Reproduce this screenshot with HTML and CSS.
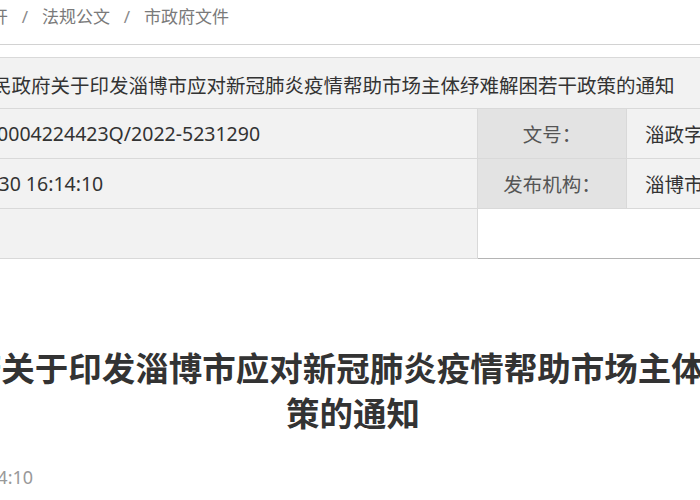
FILE: index.html
```html
<!DOCTYPE html>
<html lang="zh-CN">
<head>
<meta charset="utf-8">
<title>淄博市人民政府关于印发淄博市应对新冠肺炎疫情帮助市场主体纾难解困若干政策的通知</title>
<link rel="stylesheet" href="styles.css">
</head>
<body>
<div class="page">
  <div class="crumbs">
    <span class="crumb-lead">您当前的位置：</span><a class="crumb" href="#">首页</a><span class="sep">/</span><a class="crumb" href="#">政务公开</a><span class="sep">/</span><a class="crumb" href="#">法规公文</a><span class="sep">/</span><a class="crumb" href="#">市政府文件</a>
  </div>

  <table class="info">
    <colgroup>
      <col class="c-label"><col class="c-value-wide"><col class="c-label"><col class="c-value">
    </colgroup>
    <tr class="row-title">
      <th class="lbl">标题：</th>
      <td class="val val-title" colspan="3">淄博市人民政府关于印发淄博市应对新冠肺炎疫情帮助市场主体纾难解困若干政策的通知</td>
    </tr>
    <tr>
      <th class="lbl">索引号：</th>
      <td class="val">11370300004224423Q/2022-5231290</td>
      <th class="lbl">文号：</th>
      <td class="val val-right">淄政字〔2022〕42号</td>
    </tr>
    <tr>
      <th class="lbl">发文日期：</th>
      <td class="val">2022-05-30 16:14:10</td>
      <th class="lbl">发布机构：</th>
      <td class="val val-right">淄博市人民政府</td>
    </tr>
    <tr>
      <th class="lbl">有效性：</th>
      <td class="val"></td>
      <td class="blank" colspan="2"></td>
    </tr>
  </table>

  <h1 class="doc-title">淄博市人民政府关于印发淄博市应对新冠肺炎疫情帮助市场主体纾难解困若干政策的通知</h1>

  <div class="meta">
    <span class="meta-date">发布日期：2022-05-30 16:14:10</span>
    <span class="meta-font">【字体：大 中 小】</span>
  </div>
</div>
</body>
</html>
```
FILE: styles.css
```css
html, body {
  margin: 0;
  padding: 0;
  background: #ffffff;
  overflow: hidden;
}

body {
  font-family: "Noto Sans", "Noto Sans CJK SC", sans-serif;
  color: #333333;
}

.page {
  width: 1200px;
  margin-left: -247px;
}

/* breadcrumb */
.crumbs {
  box-sizing: border-box;
  height: 45px;
  padding-top: 5px;
  font-size: 17px;
  line-height: 24px;
  color: #7a7a7a;
  border-bottom: 1px solid #d2d2d2;
  white-space: nowrap;
}

.crumb {
  color: #7a7a7a;
  text-decoration: none;
}

.sep {
  display: inline-block;
  width: 34px;
  text-align: center;
  color: #8a8a8a;
}

/* info table */
.info {
  width: 1200px;
  margin-top: 12px;
  border-collapse: collapse;
  table-layout: fixed;
  font-size: 19.5px;
}

.c-label { width: 149px; }
.c-value-wide { width: 575px; }
.c-value { width: 328px; }

.info th,
.info td {
  height: 49px;
  padding: 0;
  border: 1px solid #d9d9d9;
  white-space: nowrap;
  overflow: hidden;
}

.lbl {
  background: #e3e3e3;
  color: #555555;
  font-weight: normal;
  text-align: center;
}

.val {
  background: #f2f2f2;
  color: #333333;
  text-align: left;
}

.info .val {
  padding-left: 16px;
}

.info .val-right {
  padding-left: 18px;
}

.info .val-title {
  padding-left: 11px;
  padding-top: 3px;
}

.info .row-title th,
.info .row-title td {
  height: 47px;
}

.info .row-title th {
  padding-top: 3px;
}

.info .blank {
  background: #ffffff;
  border-bottom-color: #b4b4b4;
  border-left-color: #d3d3d3;
}

/* document title */
.doc-title {
  margin: 87px 0 0;
  font-size: 33.5px;
  line-height: 45px;
  font-weight: 700;
  text-align: center;
  color: #333333;
}

/* meta line */
.meta {
  display: flex;
  justify-content: space-between;
  margin-top: 29px;
  padding: 0 20px;
  font-size: 18px;
  line-height: 24px;
  color: #999999;
  white-space: nowrap;
}
```
